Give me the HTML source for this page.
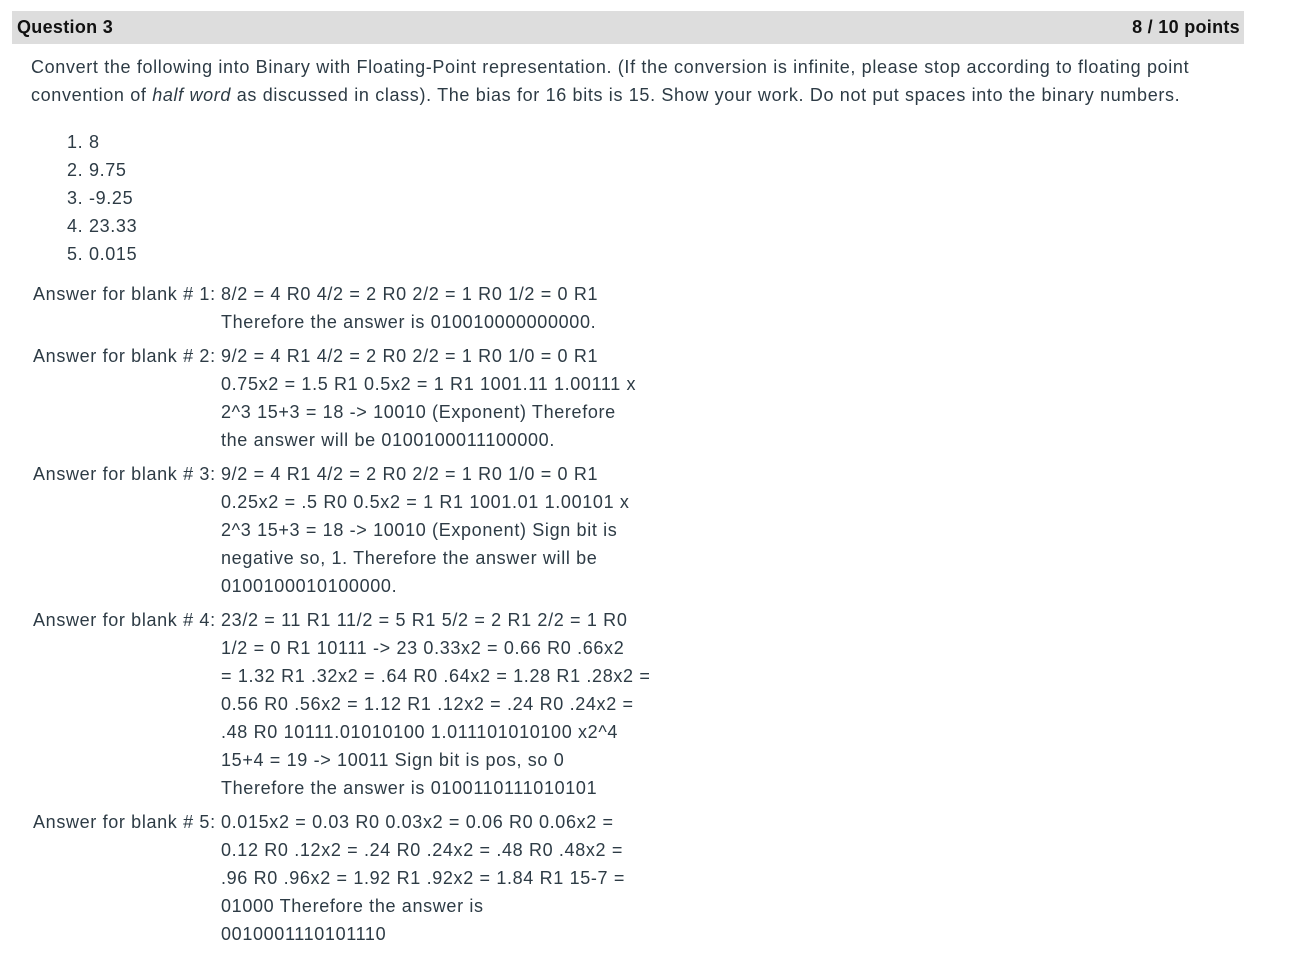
<!DOCTYPE html>
<html><head><meta charset="utf-8"><style>
body{margin:0;background:#fff;width:1304px;height:958px;position:relative;font-family:"Liberation Sans",sans-serif;color:#2d3b45;font-size:18px;letter-spacing:0.65px;}
.hdr{position:absolute;left:12px;top:11px;width:1232px;height:33px;background:#dddddd;letter-spacing:0.3px;}
.hdr b{position:absolute;top:6px;font-size:18px;color:#111;}
.l{position:absolute;white-space:nowrap;line-height:28px;height:28px;}
</style></head><body>
<div class="hdr"><b style="left:5px">Question 3</b><b style="right:4px">8 / 10 points</b></div>
<div class="l" style="left:31px;top:53px">Convert the following into Binary with Floating-Point representation. (If the conversion is infinite, please stop according to floating point</div>
<div class="l" style="left:31px;top:81px">convention of <i>half word</i> as discussed in class). The bias for 16 bits is 15. Show your work. Do not put spaces into the binary numbers.</div>
<div class="l" style="left:67px;top:128px">1. 8</div>
<div class="l" style="left:67px;top:156px">2. 9.75</div>
<div class="l" style="left:67px;top:184px">3. -9.25</div>
<div class="l" style="left:67px;top:212px">4. 23.33</div>
<div class="l" style="left:67px;top:240px">5. 0.015</div>

<div class="l" style="left:33px;top:280px">Answer for blank # 1:</div>
<div class="l" style="left:221px;top:280px">8/2 = 4 R0 4/2 = 2 R0 2/2 = 1 R0 1/2 = 0 R1</div>
<div class="l" style="left:221px;top:308px">Therefore the answer is 010010000000000.</div>

<div class="l" style="left:33px;top:342px">Answer for blank # 2:</div>
<div class="l" style="left:221px;top:342px">9/2 = 4 R1 4/2 = 2 R0 2/2 = 1 R0 1/0 = 0 R1</div>
<div class="l" style="left:221px;top:370px">0.75x2 = 1.5 R1 0.5x2 = 1 R1 1001.11 1.00111 x</div>
<div class="l" style="left:221px;top:398px">2^3 15+3 = 18 -&gt; 10010 (Exponent) Therefore</div>
<div class="l" style="left:221px;top:426px">the answer will be 0100100011100000.</div>

<div class="l" style="left:33px;top:460px">Answer for blank # 3:</div>
<div class="l" style="left:221px;top:460px">9/2 = 4 R1 4/2 = 2 R0 2/2 = 1 R0 1/0 = 0 R1</div>
<div class="l" style="left:221px;top:488px">0.25x2 = .5 R0 0.5x2 = 1 R1 1001.01 1.00101 x</div>
<div class="l" style="left:221px;top:516px">2^3 15+3 = 18 -&gt; 10010 (Exponent) Sign bit is</div>
<div class="l" style="left:221px;top:544px">negative so, 1. Therefore the answer will be</div>
<div class="l" style="left:221px;top:572px">0100100010100000.</div>

<div class="l" style="left:33px;top:606px">Answer for blank # 4:</div>
<div class="l" style="left:221px;top:606px">23/2 = 11 R1 11/2 = 5 R1 5/2 = 2 R1 2/2 = 1 R0</div>
<div class="l" style="left:221px;top:634px">1/2 = 0 R1 10111 -&gt; 23 0.33x2 = 0.66 R0 .66x2</div>
<div class="l" style="left:221px;top:662px">= 1.32 R1 .32x2 = .64 R0 .64x2 = 1.28 R1 .28x2 =</div>
<div class="l" style="left:221px;top:690px">0.56 R0 .56x2 = 1.12 R1 .12x2 = .24 R0 .24x2 =</div>
<div class="l" style="left:221px;top:718px">.48 R0 10111.01010100 1.011101010100 x2^4</div>
<div class="l" style="left:221px;top:746px">15+4 = 19 -&gt; 10011 Sign bit is pos, so 0</div>
<div class="l" style="left:221px;top:774px">Therefore the answer is 0100110111010101</div>

<div class="l" style="left:33px;top:808px">Answer for blank # 5:</div>
<div class="l" style="left:221px;top:808px">0.015x2 = 0.03 R0 0.03x2 = 0.06 R0 0.06x2 =</div>
<div class="l" style="left:221px;top:836px">0.12 R0 .12x2 = .24 R0 .24x2 = .48 R0 .48x2 =</div>
<div class="l" style="left:221px;top:864px">.96 R0 .96x2 = 1.92 R1 .92x2 = 1.84 R1 15-7 =</div>
<div class="l" style="left:221px;top:892px">01000 Therefore the answer is</div>
<div class="l" style="left:221px;top:920px">0010001110101110</div>
</body></html>
